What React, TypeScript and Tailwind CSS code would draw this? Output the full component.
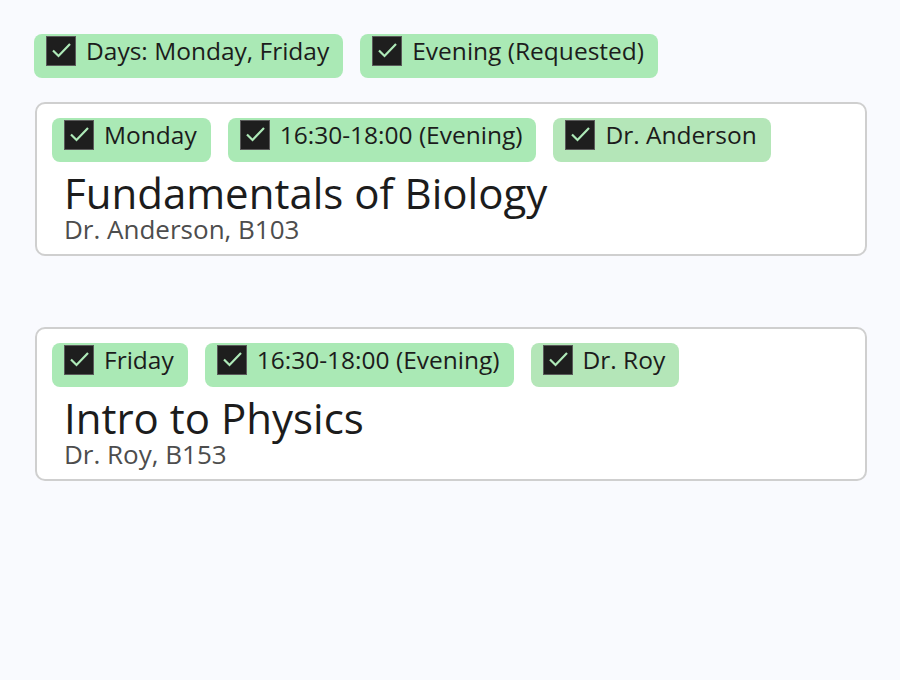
import React from "react";

type Tag = { label: string; muted?: boolean };

const courses = [
    {
        title: "Fundamentals of Biology",
        sub: "Dr. Anderson, B103",
        tags: [{ label: "Monday" }, { label: "16:30-18:00 (Evening)" }, { label: "Dr. Anderson", muted: true }],
    },
    {
        title: "Intro to Physics",
        sub: "Dr. Roy, B153",
        tags: [{ label: "Friday" }, { label: "16:30-18:00 (Evening)" }, { label: "Dr. Roy", muted: true }],
    },
];

function Check() {
    return (
        <span className="block w-[30px] h-[30px] shrink-0 bg-[#1e1e1e] border border-[#5a5a5a]">
            <svg width="28" height="28" viewBox="0 0 28 28" fill="none">
                <path d="M6 13.5l5.5 5.5L23 7" stroke="#aee9b8" strokeWidth="2.2" />
            </svg>
        </span>
    );
}

function Chip({ label, muted }: Tag) {
    return (
        <div className={`flex items-start gap-[10px] pl-3 pr-[14px] pt-[2px] pb-3 rounded-lg ${muted ? "bg-[#b4e6b8]" : "bg-[#aae9b5]"}`}>
            <Check />
            <span className="text-[24.5px] leading-[30px] text-[#1c1c1c] whitespace-nowrap">{label}</span>
        </div>
    );
}

export default function App() {
    return (
        <div className="min-h-[680px] bg-[#f9fafe] pt-[34px] pl-[34px] pr-[33px] font-['Open_Sans',sans-serif]">
            <div className="flex gap-[17px]">
                <Chip label="Days: Monday, Friday" />
                <Chip label="Evening (Requested)" />
            </div>

            <div className="flex flex-col gap-[71px] mt-[24px] ml-px">
                {courses.map((c) => (
                    <div key={c.title} className="bg-white border-2 border-[#cfcfcf] rounded-[10px] pt-[14px] pl-[15px] pr-4 pb-3">
                        <div className="flex gap-[17px]">
                            {c.tags.map((t) => (
                                <Chip key={t.label} {...t} />
                            ))}
                        </div>
                        <div className="pl-3">
                            <div className="text-[42px] leading-[46px] text-[#1c1c1c] mt-[8px]">{c.title}</div>
                            <div className="text-[26px] leading-[26px] text-[#4d4d4d]">{c.sub}</div>
                        </div>
                    </div>
                ))}
            </div>
        </div>
    );
}
